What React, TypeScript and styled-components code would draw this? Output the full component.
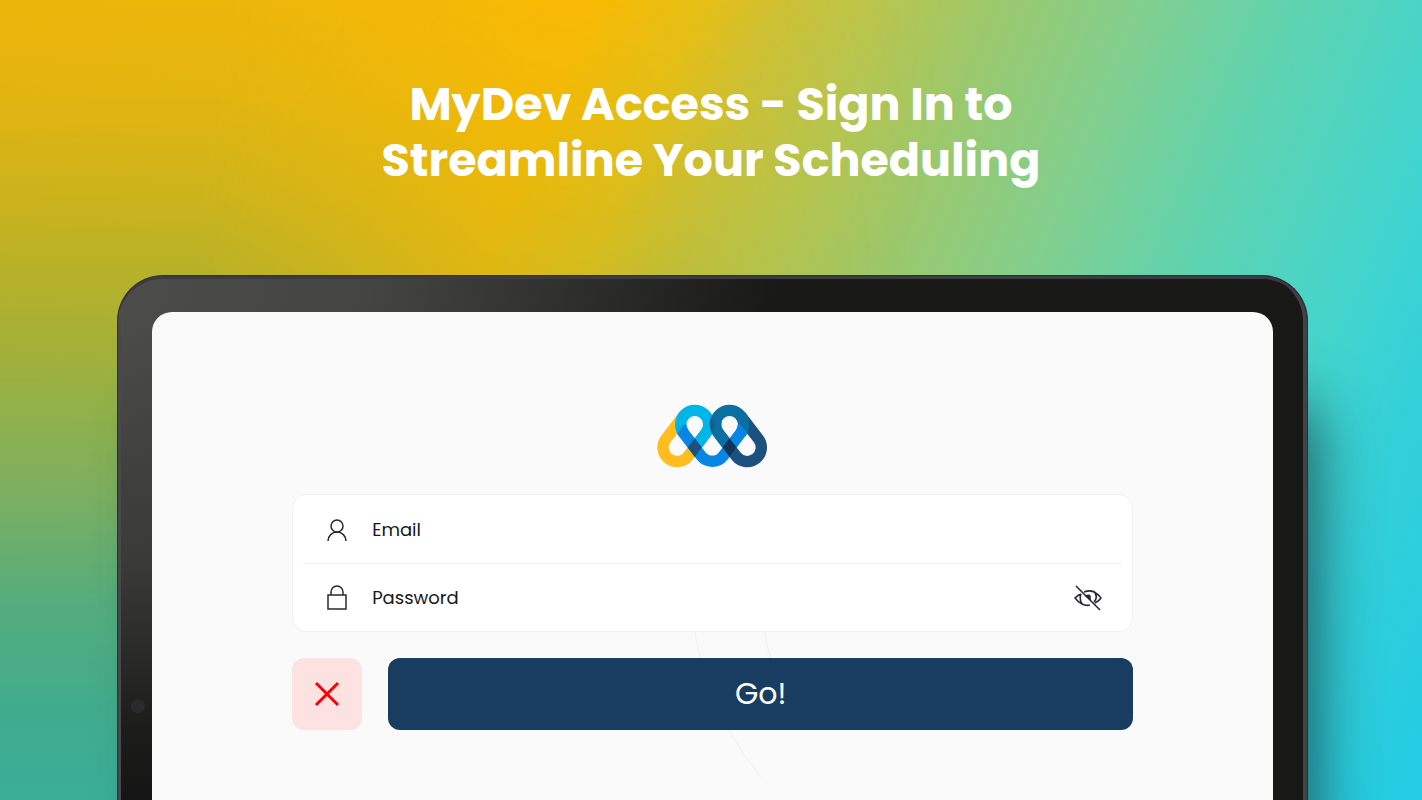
import React, { useState } from "react";
import styled, { createGlobalStyle } from "styled-components";

const GlobalStyle = createGlobalStyle`
  *, *::before, *::after { box-sizing: border-box; }
  body {
    margin: 0;
    font-family: Poppins, Inter, "Liberation Sans", sans-serif;
    color: #17171c;
  }
`;

const Page = styled.main`
  position: relative;
  isolation: isolate;
  display: flex;
  flex-direction: column;
  min-height: 100vh;
  overflow: hidden;
  background: linear-gradient(
    112deg,
    #ffb700 0%,
    #ffbb00 34%,
    #edc012 40%,
    #d0c234 45%,
    #bcc64c 50%,
    #9cc86c 57%,
    #80cf90 66%,
    #60d3ae 74%,
    #4cd4c4 81%,
    #3ed4d2 86%,
    #34d0d8 90%,
    #22cbe4 100%
  );

  &::before {
    content: "";
    position: absolute;
    inset: 0;
    z-index: -1;
    background: linear-gradient(
      180deg,
      rgba(110, 170, 80, 0.13) 0%,
      rgba(110, 170, 80, 0.2) 12%,
      rgba(110, 170, 80, 0.36) 25%,
      rgba(110, 170, 80, 0.5) 34%,
      rgba(115, 172, 85, 0.65) 43%,
      rgba(110, 175, 95, 0.74) 50%,
      rgba(105, 174, 110, 0.88) 62%,
      rgba(80, 172, 128, 0.97) 75%,
      #42ac8c 88%,
      #3aae98 100%
    );
    mask-image: linear-gradient(
      98deg,
      #000 0%,
      #000 15%,
      rgba(0, 0, 0, 0.75) 24%,
      rgba(0, 0, 0, 0.45) 34%,
      rgba(0, 0, 0, 0.38) 44%,
      transparent 62%
    );
  }
`;

const Headline = styled.h1`
  margin: 0;
  padding: 76px 24px 87px;
  text-align: center;
  font-size: 46px;
  line-height: 56px;
  font-weight: 700;
  color: #fff;

  span { display: block; }
`;

const Tablet = styled.section`
  position: relative;
  flex: 1;
  display: flex;
  margin: 0 8% 0 117px;
  padding: 36px 34px 0;
  border: 1px solid #2f2d38;
  border-bottom: 0;
  border-radius: 46px 46px 0 0;
  background: linear-gradient(100deg, #4c4c4a 0%, #444443 20%, #181817 52%, #181816 100%);
  box-shadow:
    inset 0 4px 0 -1px #3c3b42,
    inset -4px 0 0 0 #434246,
    26px 110px 60px -18px rgba(20, 60, 65, 0.8);

  &::before {
    content: "";
    position: absolute;
    left: 0;
    top: 46px;
    bottom: 0;
    width: 34px;
    border-left: 3px solid #48474c;
    background: linear-gradient(180deg, transparent 0%, #3a3a39 50%, #1c1c1b 85%, #151515 100%);
  }
`;

const Camera = styled.span`
  position: absolute;
  left: 13px;
  bottom: 87px;
  width: 14px;
  height: 14px;
  border-radius: 50%;
  background: #2b2b2e;
`;

const Screen = styled.div`
  position: relative;
  flex: 1;
  display: flex;
  flex-direction: column;
  align-items: center;
  padding: 92px 0 70px;
  border-radius: 20px 20px 0 0;
  background: #fafafa;
`;

const Watermark = styled.svg`
  position: absolute;
  left: 50%;
  bottom: 0;
  width: 160px;
  height: 180px;
  overflow: visible;
  fill: none;
  stroke: #f1f1f1;
`;

const LogoMark = styled.svg`
  display: block;
  width: 111px;
  height: 64px;
  fill: none;
  stroke-width: 34;
`;

const Form = styled.form`
  position: relative;
  width: 75%;
  margin-top: 26px;
  display: flex;
  flex-direction: column;
  gap: 26px;
`;

const Fields = styled.div`
  padding: 0 10px;
  border: 1px solid #f1f1f1;
  border-radius: 14px;
  background: #fff;
`;

const Field = styled.div`
  display: flex;
  align-items: center;
  height: 68px;
  padding: 2px 20px 0 22px;

  & + & {
    border-top: 1px solid #f0f0f0;
    padding-top: 0;
  }
`;

const FieldIcon = styled.svg`
  flex: none;
  width: 24px;
  height: 28px;
  margin-right: 23px;
  fill: none;
  stroke: #2a2833;
  stroke-width: 1.5;
`;

const FieldLabel = styled.label`
  font-size: 18px;
  line-height: 28px;
`;

const TextInput = styled.input`
  flex: 1;
  min-width: 0;
  height: 40px;
  padding: 0 12px;
  border: 0;
  outline: 0;
  background: transparent;
  font: inherit;
  font-size: 18px;
`;

const IconButton = styled.button`
  display: flex;
  padding: 0;
  border: 0;
  background: transparent;
  cursor: pointer;

  svg {
    width: 28px;
    height: 28px;
    fill: none;
    stroke: #2a2833;
    stroke-width: 1.6;
  }
`;

const Actions = styled.div`
  display: flex;
  gap: 26px;
`;

const ActionButton = styled.button<{ $primary?: boolean }>`
  display: flex;
  align-items: center;
  justify-content: center;
  flex: ${(p) => (p.$primary ? "1" : "0 0 70px")};
  height: 72px;
  padding: 0;
  border: 0;
  border-radius: 12px;
  background: ${(p) => (p.$primary ? "#183d61" : "#fce3e2")};
  color: ${(p) => (p.$primary ? "#fff" : "#fb0007")};
  font: inherit;
  font-size: 30px;
  cursor: pointer;
`;

const Logo = () => (
  <LogoMark viewBox="50 43 332 191" role="img" aria-label="MyDev">
    <clipPath id="inner-band">
      <path d="M143 88L90 157V240H340V157L287 88Z" />
    </clipPath>
    <path stroke="#ffbd1f" d="M163 173L143 199A42 42 0 0 1 77 147L130 78" />
    <path stroke="#1a517e" d="M267 173L287 199A42 42 0 0 0 353 147L300 78" />
    <path stroke="#00b5e7" d="M163 173L196 130A42 42 0 1 0 130 130" />
    <path stroke="#0c6fa3" d="M300 130A42 42 0 1 0 234 130L267 173" />
    <path
      stroke="#0787e3"
      clipPath="url(#inner-band)"
      d="M121 104A42 42 0 0 0 130 130L182 198A42 42 0 0 0 248 198L300 130A42 42 0 0 0 309 104"
    />
    <path stroke="#00b5e7" d="M173 160L196 130A42 42 0 0 0 202 90" />
    <path stroke="#0c6fa3" d="M228 90A42 42 0 0 0 234 130L257 160" />
    <g stroke="none">
      <path fill="#1d507d" d="M163 145L184 173L163 201L142 173Z" />
      <path fill="#123459" d="M267 145L288 173L267 201L246 173Z" />
      <path fill="#13608f" d="M215 76A59 59 0 0 1 215 132A59 59 0 0 1 215 76Z" />
    </g>
  </LogoMark>
);

export default function App() {
  const [visible, setVisible] = useState(false);
  return (
    <>
      <GlobalStyle />
      <Page>
        <Headline>
          <span>MyDev Access - Sign In to</span>
          <span>Streamline Your Scheduling</span>
        </Headline>
        <Tablet>
          <Camera />
          <Screen>
            <Watermark viewBox="0 0 160 180" aria-hidden="true">
              <path d="M-18 12Q-14 46 17 112Q30 135 48 158M52 12Q53 24 58 40" />
            </Watermark>
            <Logo />
            <Form onSubmit={(e) => e.preventDefault()}>
              <Fields>
                <Field>
                  <FieldIcon viewBox="0 0 24 28" aria-hidden="true">
                    <circle cx="12" cy="10" r="6" />
                    <path d="M3 25a9 9 0 0 1 18 0" />
                  </FieldIcon>
                  <FieldLabel htmlFor="email">Email</FieldLabel>
                  <TextInput id="email" type="email" />
                </Field>
                <Field>
                  <FieldIcon viewBox="0 0 24 28" aria-hidden="true">
                    <path d="M3 11h18v14H3zM6 11V8a6 6 0 0 1 12 0v3" />
                  </FieldIcon>
                  <FieldLabel htmlFor="password">Password</FieldLabel>
                  <TextInput id="password" type={visible ? "text" : "password"} />
                  <IconButton
                    type="button"
                    aria-label="Show password"
                    onClick={() => setVisible(!visible)}
                  >
                    <svg viewBox="0 0 28 28" aria-hidden="true">
                      <path d="M7 10Q4 11 1 14Q4 18 8 20Q12 22 16 21M7 10Q5 15 8 20M10 8Q18 5 23 10Q26 12 27 14Q25 17 21 19M21 9Q24 14 20 18" />
                      <path fill="#2a2833" d="M12 12Q16 10 16 13L16 15Z" />
                      <path d="M2 2L26 26" />
                    </svg>
                  </IconButton>
                </Field>
              </Fields>
              <Actions>
                <ActionButton type="reset" aria-label="Cancel">
                  <svg width="26" height="26" viewBox="0 0 26 26" stroke="currentColor" strokeWidth="3">
                    <path d="M2 2L24 24M24 2L2 24" />
                  </svg>
                </ActionButton>
                <ActionButton type="submit" $primary>
                  Go!
                </ActionButton>
              </Actions>
            </Form>
          </Screen>
        </Tablet>
      </Page>
    </>
  );
}
